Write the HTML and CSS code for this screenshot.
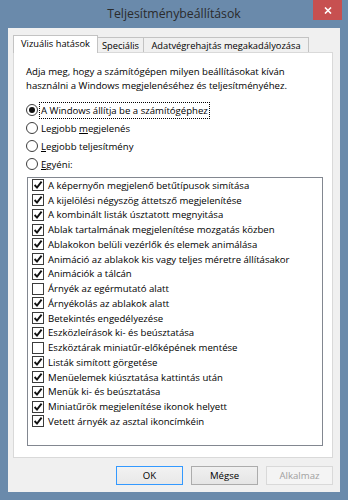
FILE: index.html
```html
<!DOCTYPE html>
<html lang="hu">
<head>
  <meta charset="UTF-8">
  <meta name="viewport" content="width=device-width, initial-scale=1.0">
  <title>Teljesítménybeállítások</title>
  <link rel="stylesheet" href="styles.css">
</head>
<body>
  <div class="window">
    <div class="titlebar">
      <span class="title">Teljesítménybeállítások</span>
      <div class="close">
        <svg width="8" height="7" viewBox="0 0 8 7"><path d="M1 0.5 L7 6.5 M7 0.5 L1 6.5" stroke="#fff" stroke-width="1.6" fill="none"/></svg>
      </div>
    </div>

    <div class="client">
      <div class="tabs">
        <div class="tab active">Vizuális hatások</div>
        <div class="tab tab-spec">Speciális</div>
        <div class="tab tab-dep">Adatvégrehajtás megakadályozása</div>
      </div>

      <div class="panel">
        <p class="intro">Adja meg, hogy a számítógépen milyen beállításokat kíván<br>használni a Windows megjelenéséhez és teljesítményéhez.</p>

        <div class="radios">
          <div class="radio-row"><span class="radio checked"></span><span class="label focus">A Windows állítja be a számítógéphez</span></div>
          <div class="radio-row"><span class="radio"></span><span class="label">Legjobb <u>m</u>egjelenés</span></div>
          <div class="radio-row"><span class="radio"></span><span class="label"><u>L</u>egjobb teljesítmény</span></div>
          <div class="radio-row"><span class="radio"></span><span class="label"><u>E</u>gyéni:</span></div>
        </div>

        <ul class="effects">
          <li><span class="check on"></span>A képernyőn megjelenő betűtípusok simítása</li>
          <li><span class="check on"></span>A kijelölési négyszög áttetsző megjelenítése</li>
          <li><span class="check on"></span>A kombinált listák úsztatott megnyitása</li>
          <li><span class="check on"></span>Ablak tartalmának megjelenítése mozgatás közben</li>
          <li><span class="check on"></span>Ablakokon belüli vezérlők és elemek animálása</li>
          <li><span class="check on"></span>Animáció az ablakok kis vagy teljes méretre állításakor</li>
          <li><span class="check on"></span>Animációk a tálcán</li>
          <li><span class="check"></span>Árnyék az egérmutató alatt</li>
          <li><span class="check on"></span>Árnyékolás az ablakok alatt</li>
          <li><span class="check on"></span>Betekintés engedélyezése</li>
          <li><span class="check on"></span>Eszközleírások ki- és beúsztatása</li>
          <li><span class="check"></span>Eszköztárak miniatűr-előképének mentése</li>
          <li><span class="check on"></span>Listák simított görgetése</li>
          <li><span class="check on"></span>Menüelemek kiúsztatása kattintás után</li>
          <li><span class="check on"></span>Menük ki- és beúsztatása</li>
          <li><span class="check on"></span>Miniatűrök megjelenítése ikonok helyett</li>
          <li><span class="check on"></span>Vetett árnyék az asztal ikoncímkéin</li>
        </ul>
      </div>

      <div class="buttons">
        <button class="btn default">OK</button>
        <button class="btn">Mégse</button>
        <button class="btn" disabled>Alkalmaz</button>
      </div>
    </div>
  </div>
</body>
</html>
```

FILE: styles.css
```css
body {
  margin: 0;
  background-color: #6a8aab;
  font-family: 'Open Sans', 'Noto Sans', sans-serif;
  font-size: 9.6px;
  color: #000;
}

.window {
  width: 348px;
  height: 500px;
  display: flex;
  flex-direction: column;
}

.titlebar {
  position: relative;
  height: 28px;
  display: flex;
  justify-content: center;
  align-items: center;
}

.title {
  font-size: 12.3px;
  color: #2b2b2b;
  margin-top: -1px;
}

.close {
  position: absolute;
  top: 0;
  right: 6px;
  width: 29px;
  height: 20px;
  background-color: #c75050;
  display: flex;
  justify-content: center;
  align-items: center;
}

.client {
  flex: 1;
  margin: 0 8px 8px;
  padding: 7px 7px 0 5px;
  background-color: #f0f0f0;
  display: flex;
  flex-direction: column;
}

.tabs {
  display: flex;
  align-items: flex-end;
  height: 17px;
}

.tab {
  box-sizing: border-box;
  height: 15px;
  border: 1px solid #c3c3c3;
  border-bottom: none;
  background-color: #f0f0f0;
  display: flex;
  justify-content: center;
  align-items: center;
  margin-left: -1px;
  font-size: 9.3px;
}

.tab.active {
  position: relative;
  z-index: 1;
  height: 18px;
  margin-left: 0;
  margin-bottom: -1px;
  width: 85px;
  background-color: #fff;
  padding-bottom: 2px;
}

.tab-spec { width: 47px; }
.tab-dep { width: 166px; }

.panel {
  box-sizing: border-box;
  width: 320px;
  height: 406px;
  border: 1px solid #d9d9d9;
  background-color: #fff;
  padding: 12px 9px 0 12px;
  display: flex;
  flex-direction: column;
}

.intro {
  margin: 0;
  line-height: 14px;
}

.radios {
  margin-top: 8px;
}

.radio-row {
  height: 18px;
  display: flex;
  align-items: center;
}

.radio {
  box-sizing: border-box;
  width: 12px;
  height: 12px;
  border: 1px solid #3c3c3c;
  border-radius: 50%;
  background-color: #fff;
  margin-right: 2px;
  display: flex;
  justify-content: center;
  align-items: center;
}

.radio.checked::after {
  content: "";
  width: 6px;
  height: 6px;
  border-radius: 50%;
  background-color: #111;
}

.label {
  padding: 1px 1px;
}

.label.focus {
  outline: 1px dotted #000;
  outline-offset: 0;
}

.effects {
  box-sizing: border-box;
  list-style: none;
  margin: 4px 0 0 1px;
  padding: 0;
  height: 269px;
  border: 1px solid #828790;
}

.effects li {
  height: 14.75px;
  display: flex;
  align-items: center;
  padding-left: 4px;
}

.check {
  box-sizing: border-box;
  width: 12px;
  height: 12px;
  border: 1px solid #3c3c3c;
  background-color: #fff;
  margin-right: 4px;
  flex-shrink: 0;
}

.check.on {
  background-image: url("data:image/svg+xml;utf8,<svg xmlns='http://www.w3.org/2000/svg' width='10' height='10' viewBox='0 0 10 10'><path d='M1.6 5 L4 7.6 L8.6 1.6' stroke='%23111' stroke-width='1.9' fill='none'/></svg>");
  background-repeat: no-repeat;
  background-position: center;
}

.buttons {
  display: flex;
  justify-content: flex-end;
  gap: 8px;
  margin-top: 8px;
  width: 320px;
}

.btn {
  box-sizing: border-box;
  width: 67px;
  height: 19px;
  padding: 0;
  font-family: inherit;
  font-size: 9.6px;
  color: #000;
  border: 1px solid #acacac;
  background: linear-gradient(#f0f0f0, #e5e5e5);
}

.btn.default {
  border-color: #3399ff;
  background: linear-gradient(#f2f2f2, #e8e8e8);
}

.btn:disabled {
  border-color: #d9d9d9;
  background: #f4f4f4;
  color: #a0a0a0;
}
```
